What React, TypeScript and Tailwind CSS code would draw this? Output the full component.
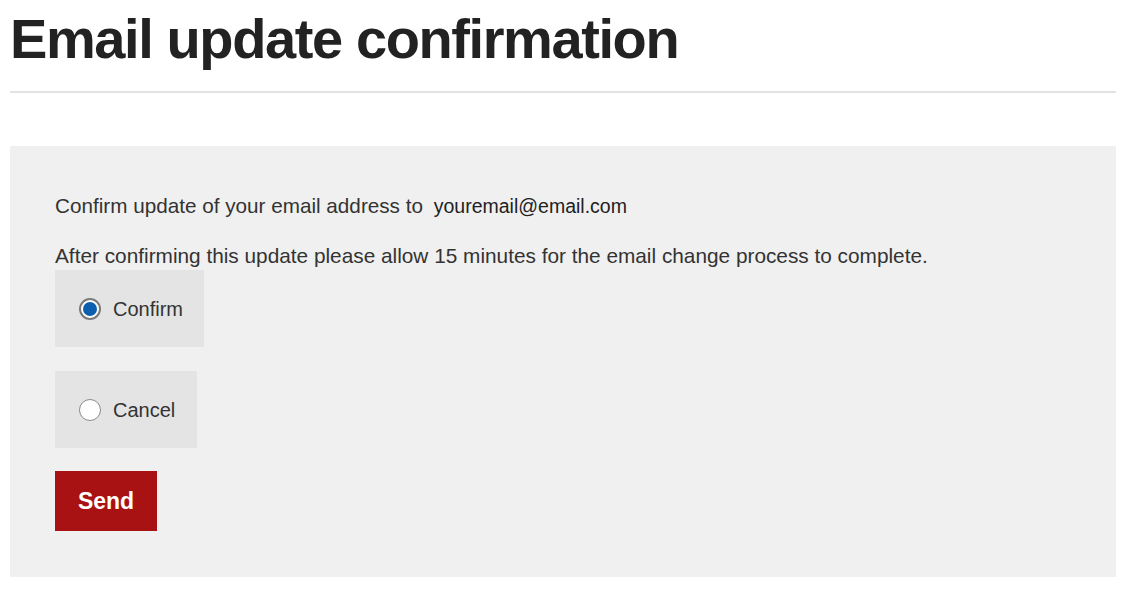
const App = () => {
  return (
    <main className="min-h-screen bg-white font-['Liberation_Sans',Arial,sans-serif] text-[#333]">
      <div className="px-[10px] pt-[8px]">
        <h1 className="text-[56px] leading-[62px] font-bold text-[#222] tracking-[-1.4px]">
          Email update confirmation
        </h1>
        <div className="mt-[21px] h-[2px] bg-[#e2e2e2] w-[1106px]" />

        <section className="mt-[53px] w-[1106px] bg-[#f0f0f0] px-[45px] pt-[46px] pb-[46px]">
          <p className="text-[20.7px] leading-[28px]">
            Confirm update of your email address to{" "}
            <span className="ml-[5px] text-[19.5px] text-[#222]">youremail@email.com</span>
          </p>
          <p className="mt-[22px] text-[20.8px] leading-[28px]">
            After confirming this update please allow 15 minutes for the email change process to complete.
          </p>

          <div className="flex flex-col items-start gap-[24px]">
            <label className="flex items-center gap-[12px] bg-[#e4e4e4] h-[77px] pl-[24px] pr-[21px]">
              <span className="w-[22px] h-[22px] rounded-full border-[2px] border-[#7a7a7a] bg-white flex items-center justify-center">
                <span className="w-[14px] h-[14px] rounded-full bg-[#0b5fad]" />
              </span>
              <span className="text-[20px]">Confirm</span>
            </label>
            <label className="flex items-center gap-[12px] bg-[#e4e4e4] h-[77px] pl-[24px] pr-[22px]">
              <span className="w-[22px] h-[22px] rounded-full border-[1.5px] border-[#8a8a8a] bg-white" />
              <span className="text-[20px]">Cancel</span>
            </label>
            <button className="bg-[#a81212] text-white font-bold text-[23px] w-[102px] h-[60px] -mt-[1px]">
              Send
            </button>
          </div>
        </section>
      </div>
    </main>
  );
};

export default App;
